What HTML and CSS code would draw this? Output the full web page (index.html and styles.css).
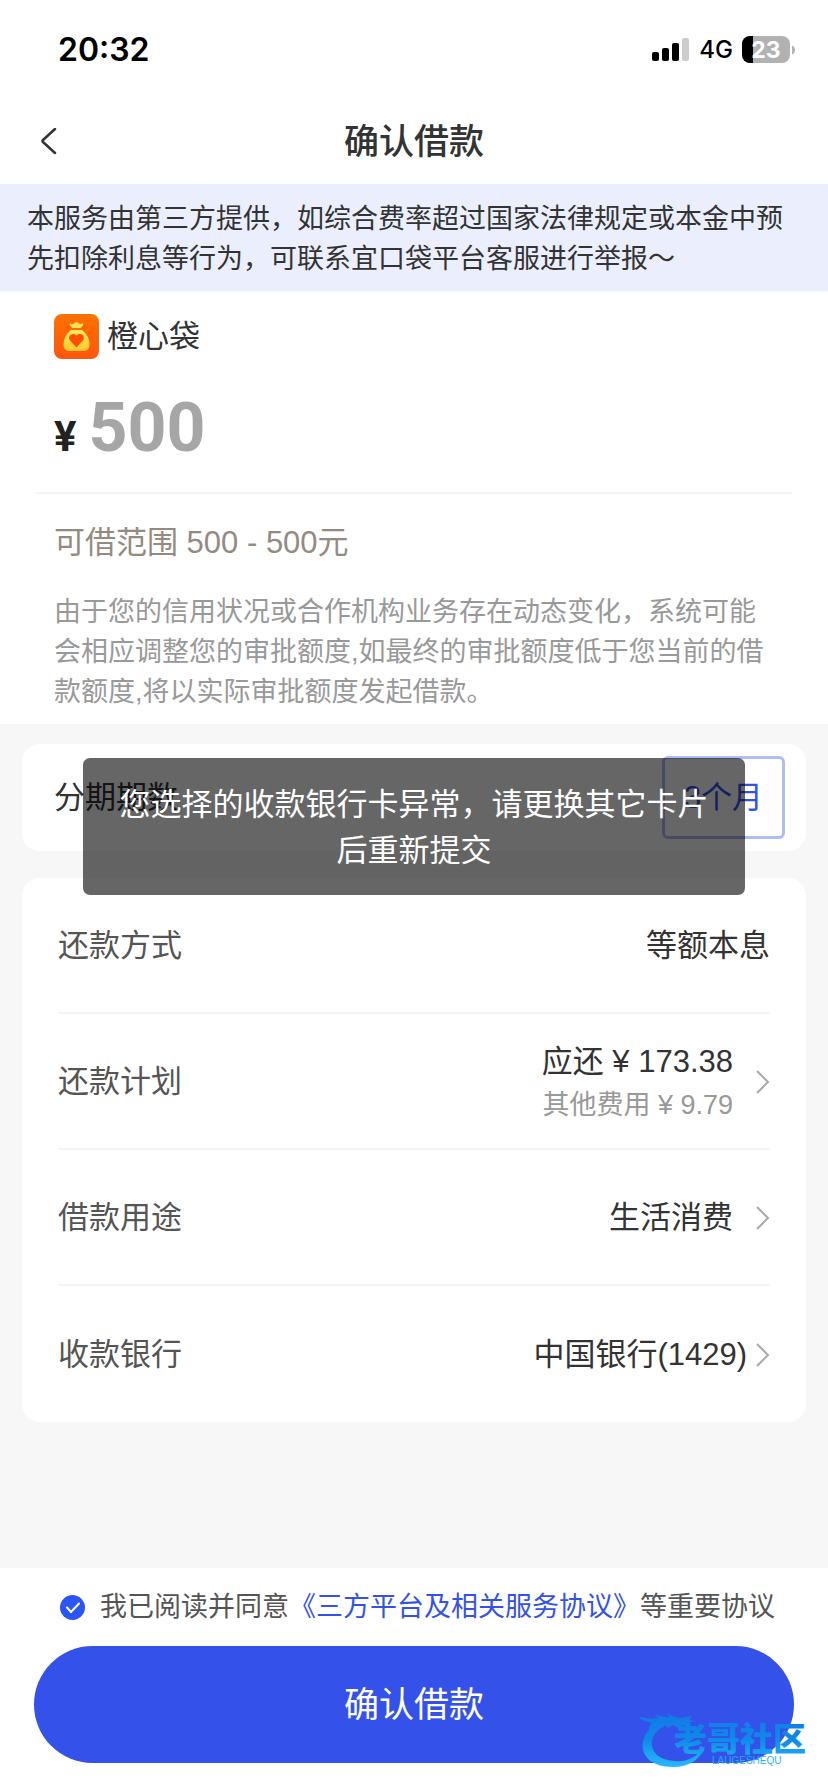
FILE: index.html
```html
<!DOCTYPE html>
<html lang="zh-CN">
<head>
<meta charset="utf-8">
<meta name="viewport" content="width=device-width">
<title>确认借款</title>
<link rel="stylesheet" href="styles.css">
</head>
<body>
<div class="status">
  <span class="clock">20:32</span>
  <div class="indicators">
    <svg class="signal" width="38" height="24" viewBox="0 0 38 24" aria-hidden="true">
      <rect x="0" y="14" width="7" height="9" rx="2"/>
      <rect x="10" y="10" width="7" height="13" rx="2"/>
      <rect x="20" y="5" width="7" height="18" rx="2"/>
      <rect x="30" y="0" width="7" height="23" rx="2" fill="#cccccc"/>
    </svg>
    <span class="network">4G</span>
    <svg class="battery" width="54" height="28" viewBox="0 0 54 28" role="img" aria-label="23%">
      <defs><clipPath id="charge"><rect width="11" height="28"/></clipPath></defs>
      <rect width="48" height="27" rx="8" fill="#b2b2b2"/>
      <rect width="48" height="27" rx="8" clip-path="url(#charge)"/>
      <path d="M50 9.500q3 1 3 4.500t-3 4.500z" fill="#b2b2b2"/>
      <text class="level" x="24" y="22" text-anchor="middle">23</text>
    </svg>
  </div>
</div>
<header class="navbar">
  <button class="back" aria-label="返回">
    <svg width="18" height="28" viewBox="0 0 18 28" fill="none" stroke="#333333" stroke-width="2.500" stroke-linecap="round" stroke-linejoin="round" aria-hidden="true"><path d="M15 1L3 12q-1 1 0 2L15 25"/></svg>
  </button>
  <h1 class="title">确认借款</h1>
</header>
<p class="notice">本服务由第三方提供，如综合费率超过国家法律规定或本金中预先扣除利息等行为，可联系宜口袋平台客服进行举报～</p>
<section class="loan">
  <div class="brand">
    <svg width="45" height="45" viewBox="0 0 45 45" aria-hidden="true">
      <defs>
        <linearGradient id="tile" x1="0" y1="0" x2="0" y2="1"><stop stop-color="#ff7200"/><stop offset="1" stop-color="#ff5510"/></linearGradient>
        <linearGradient id="bag" x1="0" y1="0" x2="0" y2="1"><stop stop-color="#ffe95a"/><stop offset="1" stop-color="#ffc928"/></linearGradient>
      </defs>
      <rect width="45" height="45" rx="8" fill="url(#tile)"/>
      <path d="M16 9.500q2 1.500 4 0 2.500-2.500 5 0 2 1 3.500-.5 1.500 1.500-.5 3.500l-1.500 1.500h-8L17 12.500q-2-1.500-1-3z" fill="#ffe458"/>
      <path d="M17 16h11q8 6.500 7.500 15-.3 6-6.500 6H16q-6.200 0-6.500-6Q9.500 22 17 16z" fill="url(#bag)"/>
      <path d="M22.500 33.500l-6.500-7c-3-4 2-9 6.500-5 4.500-4 9.500 1 6.500 5z" fill="#ff4e08"/>
    </svg>
    <span class="brand-name">橙心袋</span>
  </div>
  <label class="amount">
    <span class="currency">¥</span>
    <input class="amount-input" type="text" value="500" aria-label="借款金额" readonly>
  </label>
  <p class="range">可借范围 500 - 500元</p>
  <p class="hint">由于您的信用状况或合作机构业务存在动态变化，系统可能会相应调整您的审批额度,如最终的审批额度低于您当前的借款额度,将以实际审批额度发起借款。</p>
</section>
<main class="details">
  <section class="card term">
    <span class="term-label">分期期数</span>
    <button class="term-option">3个月</button>
  </section>
  <section class="card">
    <div class="row"><span class="label">还款方式</span><span class="value last">等额本息</span></div>
    <button class="row">
      <span class="label">还款计划</span>
      <span class="value">应还 ¥ 173.38<small class="fee">其他费用 ¥ 9.79</small></span>
      <svg class="arrow" width="14" height="24" viewBox="0 0 14 24" aria-hidden="true"><path d="M1 1l11 11L1 23"/></svg>
    </button>
    <button class="row">
      <span class="label">借款用途</span>
      <span class="value">生活消费</span>
      <svg class="arrow" width="14" height="24" viewBox="0 0 14 24" aria-hidden="true"><path d="M1 1l11 11L1 23"/></svg>
    </button>
    <button class="row">
      <span class="label">收款银行</span>
      <span class="value near">中国银行(1429)</span>
      <svg class="arrow" width="14" height="24" viewBox="0 0 14 24" aria-hidden="true"><path d="M1 1l11 11L1 23"/></svg>
    </button>
  </section>
  <div class="toast" role="alert">您选择的收款银行卡异常，请更换其它卡片后重新提交</div>
</main>
<footer class="footer">
  <div class="agreement">
    <span class="check">
      <input class="check-input" id="agree" type="checkbox" checked>
      <svg class="check-mark" width="25" height="25" viewBox="0 0 25 25" aria-hidden="true"><path d="M7 12.500l4 4.500 8-8.500"/></svg>
    </span>
    <label for="agree">我已阅读并同意<a class="link" href="#">《三方平台及相关服务协议》</a>等重要协议</label>
  </div>
  <button class="submit">确认借款</button>
  <svg class="watermark" width="176" height="66" viewBox="0 0 176 66" role="img" aria-label="老哥社区">
    <defs><linearGradient id="sea" gradientUnits="userSpaceOnUse" x1="0" y1="6" x2="0" y2="60"><stop stop-color="#1478e6"/><stop offset=".5" stop-color="#0d8ae8"/><stop offset="1" stop-color="#27b8f8"/></linearGradient></defs>
    <g fill="url(#sea)">
      <path d="M18 17C-5 29-4 61 33 61c17 0 28-8 32-21-7 10-18 17-31 15C6 53 6 28 25 20z"/>
      <path d="M1 11q8 3 17 1l-3-4q8 4 15 3l-3-4q8 5 14 5l11-2-3 4 5 1-6 2 3 3-9-1-3 3-6-3-5 3-3-3-7 4-2-3-7 4q0-5 3-7-8-1-14-6z"/>
      <text class="mark-name" x="34" y="45">老哥社区</text>
      <text class="mark-latin" x="72" y="58">LAUGESHEQU</text>
    </g>
  </svg>
</footer>
</body>
</html>
```
FILE: styles.css
```css
* { box-sizing: border-box; }

body {
  margin: 0;
  min-height: 100vh;
  display: flex;
  flex-direction: column;
  background: #ffffff;
  color: #333333;
  font-family: "Liberation Sans", "Noto Sans CJK SC", sans-serif;
  font-size: 31px;
  line-height: 46px;
}

button, input {
  font: inherit;
  color: inherit;
  border: 0;
  padding: 0;
  margin: 0;
  background: none;
}

h1, p { margin: 0; }

.status {
  display: flex;
  align-items: center;
  justify-content: space-between;
  height: 100px;
  padding: 0 32px 0 58px;
  color: #000000;
  font-family: Inter, sans-serif;
}
.clock { font-size: 32px; font-weight: 600; }
.indicators { display: flex; align-items: center; gap: 9px; }
.network { font-size: 24px; font-weight: 500; }
.level { font-size: 23px; font-weight: 700; fill: #ffffff; }

.navbar {
  display: grid;
  grid-template-columns: 1fr auto 1fr;
  align-items: center;
  height: 84px;
  padding: 0 40px;
}
.back { display: flex; justify-self: start; }
.title { font-size: 35px; font-weight: 500; }

.notice {
  padding: 15px 27px 12px;
  background: #eaeefd;
  font-size: 27px;
  line-height: 40px;
}

.loan { padding: 21px 36px 12px; }
.brand { display: flex; align-items: center; gap: 8px; padding: 0 18px; }
.brand-name { padding-top: 2px; }
.amount {
  display: flex;
  align-items: baseline;
  gap: 12px;
  padding: 28px 18px 24px;
  border-bottom: 2px solid #f5f5f5;
  font-family: Roboto, sans-serif;
  font-weight: 700;
}
.currency { color: #222222; font-size: 42px; }
.amount-input {
  flex: 1;
  min-width: 0;
  height: 80px;
  color: #a6a6a6;
  font-size: 68px;
  line-height: 80px;
}
.range { padding: 26px 18px 0; color: #958a80; }
.hint {
  padding: 26px 18px 0;
  color: #999999;
  font-size: 27px;
  line-height: 40px;
}

.details {
  position: relative;
  flex: 1;
  padding: 20px 22px;
  background: #f7f7f7;
}
.card {
  margin-bottom: 27px;
  padding: 0 36px;
  border-radius: 18px;
  background: #ffffff;
}
.term {
  display: flex;
  align-items: center;
  justify-content: space-between;
  padding: 12px 21px 12px 32px;
}
.term-option {
  width: 123px;
  height: 83px;
  border: 3px solid #afbcf8;
  border-radius: 6px;
  color: #3452ea;
}
.row {
  display: flex;
  align-items: center;
  width: 100%;
  height: 136px;
  padding-top: 2px;
  border-bottom: 2px solid #f5f5f5;
  text-align: right;
}
.row:last-child { border-bottom: 0; }
.label { flex: 1; color: #555555; text-align: left; }
.value { margin-right: 23px; }
.near { margin-right: 9px; }
.last { margin-right: 0; }
.fee { display: block; color: #999999; font-size: 27px; line-height: 40px; }
.arrow { fill: none; stroke: #aaaaaa; stroke-width: 2; }

.toast {
  position: absolute;
  top: 34px;
  left: 10%;
  width: 80%;
  padding: 24px 33px 21px;
  border-radius: 7px;
  background: rgba(0, 0, 0, 0.6);
  color: #ffffff;
  text-align: center;
}

.footer { position: relative; padding: 19px 34px 29px; }
.agreement {
  display: flex;
  align-items: center;
  gap: 15px;
  padding: 0 26px;
  margin-bottom: 19px;
  color: #555555;
  font-size: 27px;
  line-height: 40px;
  white-space: nowrap;
}
.check { display: grid; }
.check-input, .check-mark { grid-area: 1 / 1; width: 25px; height: 25px; }
.check-input { appearance: none; border-radius: 50%; }
.check-input:checked { background: #2b56f5; }
.check-mark {
  fill: none;
  stroke: #ffffff;
  stroke-width: 2;
  stroke-linecap: round;
  pointer-events: none;
}
.link { color: #3452ea; text-decoration: none; }
.submit {
  display: block;
  width: 100%;
  height: 117px;
  border-radius: 59px;
  background: #3452ea;
  color: #ffffff;
  font-size: 35px;
}
.watermark { position: absolute; right: 12px; bottom: 20px; }
.mark-name { font-family: "Noto Sans CJK SC", sans-serif; font-size: 33px; font-weight: 900; }
.mark-latin { font-size: 10px; }
```
